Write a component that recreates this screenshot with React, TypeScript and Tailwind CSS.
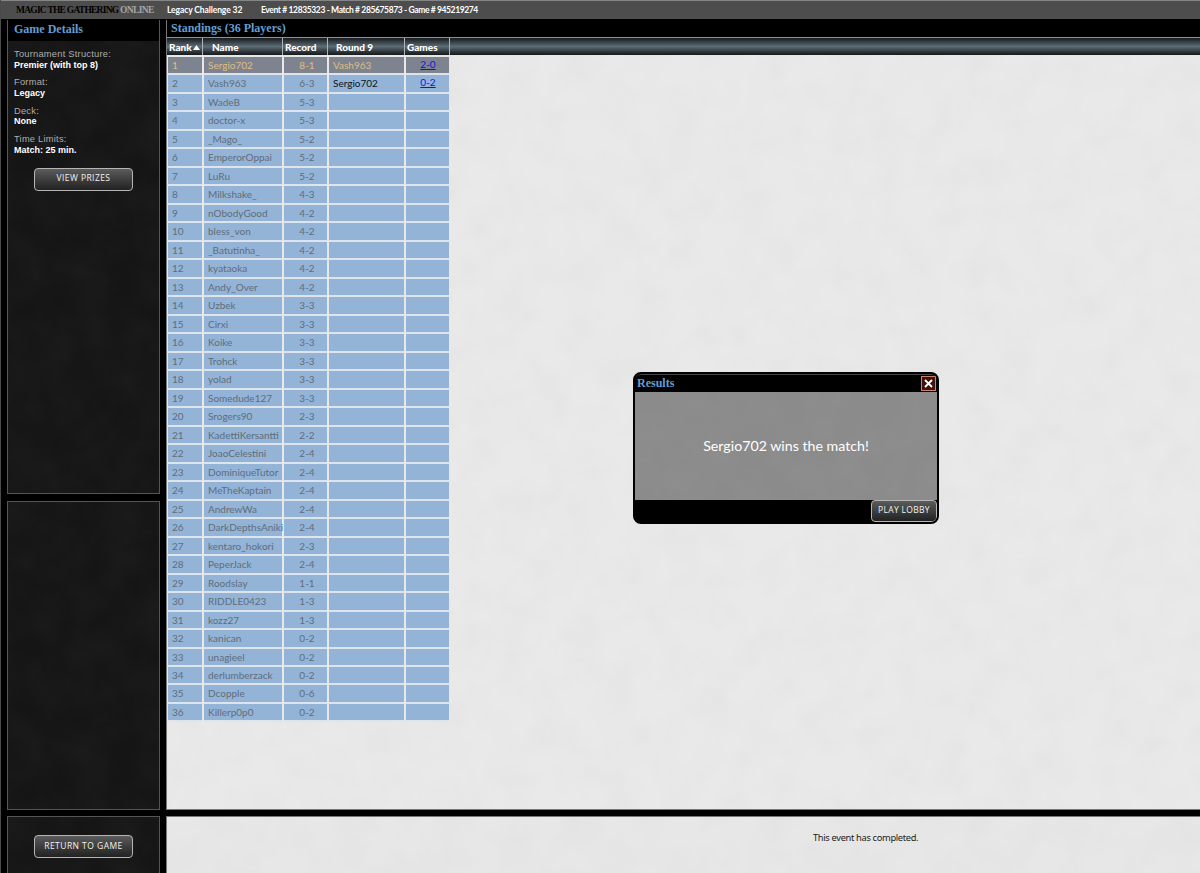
import React from "react";

type Player = [name: string, record: string];

const players: Player[] = [
  ["Sergio702", "8-1"],
  ["Vash963", "6-3"],
  ["WadeB", "5-3"],
  ["doctor-x", "5-3"],
  ["_Mago_", "5-2"],
  ["EmperorOppai", "5-2"],
  ["LuRu", "5-2"],
  ["Milkshake_", "4-3"],
  ["nObodyGood", "4-2"],
  ["bless_von", "4-2"],
  ["_Batutinha_", "4-2"],
  ["kyataoka", "4-2"],
  ["Andy_Over", "4-2"],
  ["Uzbek", "3-3"],
  ["Cirxi", "3-3"],
  ["Koike", "3-3"],
  ["Trohck", "3-3"],
  ["yolad", "3-3"],
  ["Somedude127", "3-3"],
  ["Srogers90", "2-3"],
  ["KadettiKersantti", "2-2"],
  ["JoaoCelestini", "2-4"],
  ["DominiqueTutor", "2-4"],
  ["MeTheKaptain", "2-4"],
  ["AndrewWa", "2-4"],
  ["DarkDepthsAniki", "2-4"],
  ["kentaro_hokori", "2-3"],
  ["PeperJack", "2-4"],
  ["Roodslay", "1-1"],
  ["RIDDLE0423", "1-3"],
  ["kozz27", "1-3"],
  ["kanican", "0-2"],
  ["unagieel", "0-2"],
  ["derlumberzack", "0-2"],
  ["Dcopple", "0-6"],
  ["Killerp0p0", "0-2"],
];

const details = [
  ["Tournament Structure:", "Premier (with top 8)"],
  ["Format:", "Legacy"],
  ["Deck:", "None"],
  ["Time Limits:", "Match: 25 min."],
];

const pairings: Record<number, { opponent: string; games: string }> = {
  0: { opponent: "Vash963", games: "2-0" },
  1: { opponent: "Sergio702", games: "0-2" },
};

/* Mottled surface drawn behind a panel's content */
function Texture({ id, dark = false }: { id: string; dark?: boolean }) {
  return (
    <svg className="pointer-events-none absolute inset-0 h-full w-full" aria-hidden="true">
      <filter id={id} x="0" y="0" width="100%" height="100%">
        <feTurbulence type="fractalNoise" baseFrequency="0.03" numOctaves="5" seed={dark ? 4 : 9} />
        <feColorMatrix
          values={
            dark
              ? "0 0 0 0 1  0 0 0 0 1  0 0 0 0 1  0.04 0 0 0 -0.01"
              : "0 0 0 0 0.45  0 0 0 0 0.45  0 0 0 0 0.44  0.14 0 0 0 -0.05"
          }
        />
      </filter>
      <rect width="100%" height="100%" filter={`url(#${id})`} />
    </svg>
  );
}

function SideButton({ children, className = "" }: { children: React.ReactNode; className?: string }) {
  return (
    <button
      className={`flex h-[23px] w-[99px] items-center justify-center rounded-[4px] border border-[#b5b5b5] bg-linear-to-b from-[#5c5c5c] to-[#222] pb-px font-['Open_Sans',sans-serif] text-[8.5px] font-medium whitespace-nowrap text-[#f2f2f2] ${className}`}
    >
      {children}
    </button>
  );
}

function Row({ index, player }: { index: number; player: Player }) {
  const first = index === 0;
  const pairing = pairings[index];
  const cell = first ? "bg-[#7d8490]" : "bg-[#93b4d7]";
  const text = first ? "text-[#dfbe7e]" : "text-[#5f6d7c]";
  return (
    <div
      className={`grid h-[18.486px] grid-cols-[34px_78px_43px_75px_43px] grid-rows-[minmax(0,1fr)] gap-x-[2px] pl-px leading-[17px] *:min-h-0 *:border-b-2 *:border-[#dde4eb] ${text}`}
    >
      <div className={`${cell} pl-[4px]`}>{index + 1}</div>
      <div className={`${cell} pl-[4px] whitespace-nowrap`}>{player[0]}</div>
      <div className={`${cell} pl-[3px] text-center`}>{player[1]}</div>
      <div className={`${cell} pl-[4px] ${first ? "" : "text-[#071426]"}`}>{pairing?.opponent}</div>
      <div className={`${cell} pl-px text-center leading-[14px]`}>
        {pairing && (
          <a href="#" className="text-[10px] text-[#1010e8] underline">
            {pairing.games}
          </a>
        )}
      </div>
    </div>
  );
}

export default function App() {
  return (
    <div className="relative flex h-[873px] w-[1200px] flex-col overflow-hidden border-l border-[#4a4a4a] bg-black font-[Lato,sans-serif] text-[10px]">
      <header className="flex h-[19px] shrink-0 items-center border-t border-[#858585] bg-[#4d4d4d] pt-px font-bold whitespace-nowrap">
        <div className="w-[166px] pl-[15px] font-['Liberation_Serif',serif] text-[9.5px] tracking-[-0.76px] text-black">
          MAGIC THE GATHERING <span className="tracking-[-0.65px] text-[#a5a5a5]">ONLINE</span>
        </div>
        <div className="w-[94px] text-[8.5px] tracking-[-0.1px] text-white">Legacy Challenge 32</div>
        <div className="text-[8.5px] tracking-[-0.38px] text-white">Event # 12835323 - Match # 285675873 - Game # 945219274</div>
      </header>

      <div className="flex min-h-0 flex-1 pt-px">
        <aside className="ml-[6px] flex w-[153px] shrink-0 flex-col">
          <section className="relative h-[474px] shrink-0 border border-t-0 border-[#555] bg-[#151515]">
            <Texture id="details-texture" dark />
            <div className="relative">
              <h2 className="h-[21px] bg-black pl-[6px] font-['Liberation_Serif',serif] text-[12px] leading-[19px] font-bold text-[#639dd3]">
                Game Details
              </h2>
              <dl className="pl-[6px] pt-[8px] font-['Liberation_Sans',sans-serif] text-[9.3px] font-bold">
                {details.map(([label, value]) => (
                  <div key={label} className="h-[28.4px]">
                    <dt className="h-[10.5px] leading-[11px] font-normal tracking-[0.24px] text-[#adadad]">{label}</dt>
                    <dd className="h-[11px] text-[9px] leading-[11px] text-white">{value}</dd>
                  </div>
                ))}
              </dl>
              <SideButton className="mt-[5px] ml-[26px] tracking-[0.42px]">VIEW PRIZES</SideButton>
            </div>
          </section>
          <section className="relative mt-[7px] h-[309px] shrink-0 border border-[#555] bg-[#151515]">
            <Texture id="chat-texture" dark />
          </section>
          <section className="relative mt-[6px] flex-1 border border-b-0 border-[#555] bg-[#151515]">
            <Texture id="return-texture" dark />
            <SideButton className="relative mt-[18px] ml-[26px] tracking-[0.46px]">RETURN TO GAME</SideButton>
          </section>
        </aside>

        <main className="ml-[6px] flex min-w-0 flex-1 flex-col">
          <div className="flex h-[790px] shrink-0 flex-col border-b border-l border-[#777]">
            <h1 className="h-[17px] shrink-0 bg-black pl-[4px] font-['Liberation_Serif',serif] text-[12px] leading-[17px] font-bold text-[#639dd3]">
              Standings (36 Players)
            </h1>
            <div className="grid h-[18px] shrink-0 grid-cols-[36px_80px_45px_77px_45px_1fr] border-t border-[#8a9296] bg-linear-to-b from-[#171c1f] via-[#5d6d75] via-50% to-[#15191b] leading-[18px] font-black text-white *:border-r *:border-[#aeb4b7] *:last:border-r-0">
              <div className="flex items-center pl-[2px]">
                Rank
                <svg className="ml-[1.5px] h-[5px] w-[7px]" viewBox="0 0 7 5">
                  <path d="M3.5 0 7 5H0Z" fill="#fff" />
                </svg>
              </div>
              <div className="pl-[9px]">Name</div>
              <div className="pl-[2px]">Record</div>
              <div className="pl-[8px]">Round 9</div>
              <div className="pl-[2px]">Games</div>
              <div />
            </div>
            <div className="relative flex-1 bg-[#e9e9e9]">
              <Texture id="standings-texture" />
              <div className="relative pt-[2px]">
                {players.map((player, index) => (
                  <Row key={player[0]} index={index} player={player} />
                ))}
              </div>
            </div>
          </div>
          <footer className="relative mt-[6px] flex-1 border-t border-l border-[#777] bg-[#e7e7e7]">
            <Texture id="footer-texture" />
            <p className="relative pt-[14px] pl-[646px] font-['Noto_Sans',sans-serif] text-[9.3px] leading-[14px] tracking-[-0.33px] text-[#222]">
              This event has completed.
            </p>
          </footer>
        </main>
      </div>

      <div
        role="dialog"
        className="absolute top-[372px] left-[632px] flex h-[152px] w-[306px] flex-col overflow-hidden rounded-[8px] border-2 border-black bg-black"
      >
        <div className="flex h-[18px] shrink-0 items-center justify-between rounded-t-[6px] border-t border-[#444] pr-px pl-[2px]">
          <h2 className="-mt-px font-['Liberation_Serif',serif] text-[12px] leading-[16px] font-bold text-[#639dd3]">Results</h2>
          <button aria-label="Close" className="-mt-px flex size-[15px] items-center justify-center border border-[#cf826b] bg-[#450f0c]">
            <svg className="size-[9px]" viewBox="0 0 9 9">
              <path d="M1 1l7 7M8 1l-7 7" stroke="#fff" strokeWidth="1.8" />
            </svg>
          </button>
        </div>
        <div className="relative flex h-[108px] shrink-0 items-center justify-center bg-[#8b8b8b]">
          <Texture id="dialog-texture" />
          <p className="relative text-[14.2px] text-white">Sergio702 wins the match!</p>
        </div>
        <div className="flex h-[22px] shrink-0 justify-end">
          <SideButton className="h-[22px]! w-[66px]! tracking-[0.32px]">PLAY LOBBY</SideButton>
        </div>
      </div>
    </div>
  );
}
